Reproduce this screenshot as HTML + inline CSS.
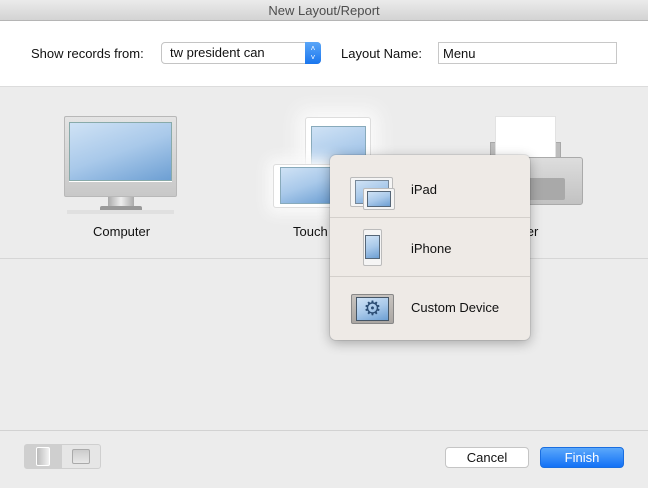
<!DOCTYPE html>
<html><head><meta charset="utf-8"><style>
*{margin:0;padding:0;box-sizing:border-box}
body{width:648px;height:488px;background:#ececec;font-family:"Liberation Sans",sans-serif;font-size:13px;color:#111;position:relative;overflow:hidden}
.a{position:absolute}
.scr{background:linear-gradient(160deg,#cfe2f5 0%,#a9c9ea 50%,#6d9fd3 100%)}
</style></head><body>
<div class="a" style="left:0;top:0;width:648px;height:21px;background:linear-gradient(#ebebeb,#d3d3d3);border-bottom:1px solid #b5b5b5;text-align:center;line-height:21px;color:#4d4d4d">New Layout/Report</div>
<div class="a" style="left:0;top:21px;width:648px;height:66px;background:#fff;border-bottom:1px solid #dcdcdc"></div>
<div class="a" style="left:31px;top:46px">Show records from:</div>
<div class="a" style="left:161px;top:42px;width:160px;height:22px;border:1px solid #c4c4c4;border-radius:4px;background:#fff;padding-left:8px;line-height:20px">tw president can</div>
<div class="a" style="left:305px;top:42px;width:16px;height:22px;background:linear-gradient(#5aa6f8,#1a76ee);border-radius:0 4px 4px 0;color:#fff;font-size:8px;text-align:center;line-height:9px;padding-top:2px">˄<br>˅</div>
<div class="a" style="left:341px;top:46px">Layout Name:</div>
<div class="a" style="left:438px;top:42px;width:179px;height:22px;border:1px solid #c8c8c8;background:#fff;padding-left:4px;line-height:22px">Menu</div>

<div class="a" style="left:64px;top:116px;width:113px;height:81px;background:linear-gradient(#e4e4e4,#c8c8c8);border:1px solid #b8b8b8;border-radius:2px"></div>
<div class="a scr" style="left:69px;top:122px;width:103px;height:59px;border:1px solid #8aa"></div>
<div class="a" style="left:69px;top:181px;width:103px;height:1px;background:#fff"></div>
<div class="a" style="left:108px;top:197px;width:26px;height:9px;background:linear-gradient(90deg,#aaa,#eee,#aaa)"></div>
<div class="a" style="left:100px;top:206px;width:42px;height:4px;background:#999;border-radius:2px 2px 0 0"></div>
<div class="a" style="left:67px;top:210px;width:107px;height:4px;background:#e0e0e0"></div>
<div class="a" style="left:93px;top:224px">Computer</div>

<div class="a" style="left:305px;top:117px;width:66px;height:70px;background:#fff;border:1px solid #ddd;border-radius:3px;box-shadow:0 0 18px 8px #fafafa"></div>
<div class="a scr" style="left:311px;top:126px;width:55px;height:60px;border:1px solid #8ab"></div>
<div class="a" style="left:273px;top:164px;width:60px;height:44px;background:#fff;border:1px solid #ddd;border-radius:3px;box-shadow:0 0 14px 6px #fafafa"></div>
<div class="a scr" style="left:280px;top:167px;width:52px;height:37px;border:1px solid #8ab"></div>
<div class="a" style="left:293px;top:224px">Touch</div>

<div class="a" style="left:490px;top:142px;width:71px;height:16px;background:#bdbdbd;border:1px solid #a8a8a8"></div>
<div class="a" style="left:495px;top:116px;width:61px;height:42px;background:#fff;border:1px solid #e2e2e2"></div>
<div class="a" style="left:480px;top:157px;width:103px;height:48px;background:linear-gradient(#ddd,#c2c2c2);border:1px solid #aaa;border-radius:3px"></div>
<div class="a" style="left:520px;top:178px;width:45px;height:22px;background:#a9a9a9;border-radius:2px"></div>
<div class="a" style="left:500px;top:224px">Printer</div>

<div class="a" style="left:0;top:258px;width:648px;height:1px;background:#d6d6d6"></div>

<div class="a" style="left:330px;top:155px;width:200px;height:185px;background:#eeeae6;border-radius:6px;box-shadow:0 3px 12px rgba(0,0,0,.3),0 0 0 1px rgba(0,0,0,.08)">
 <div class="a" style="left:0;top:62px;width:200px;height:1px;background:#d4d0cc"></div>
 <div class="a" style="left:0;top:121px;width:200px;height:1px;background:#d4d0cc"></div>
 <div class="a" style="left:20px;top:22px;width:43px;height:30px;background:#f5f5f5;border:1px solid #bbb;border-radius:2px"></div>
 <div class="a scr" style="left:25px;top:25px;width:34px;height:24px;border:1px solid #789"></div>
 <div class="a" style="left:33px;top:33px;width:32px;height:22px;background:#f5f5f5;border:1px solid #bbb;border-radius:2px"></div>
 <div class="a scr" style="left:37px;top:36px;width:24px;height:16px;border:1px solid #567"></div>
 <div class="a" style="left:81px;top:27px">iPad</div>
 <div class="a" style="left:33px;top:74px;width:19px;height:37px;background:#f5f5f5;border:1px solid #bbb;border-radius:2px"></div>
 <div class="a scr" style="left:35px;top:80px;width:15px;height:24px;border:1px solid #567"></div>
 <div class="a" style="left:81px;top:86px">iPhone</div>
 <div class="a" style="left:21px;top:139px;width:43px;height:30px;background:linear-gradient(#c8c4c0,#aaa6a2);border:1px solid #888;border-radius:2px"></div>
 <div class="a scr" style="left:26px;top:142px;width:33px;height:24px;border:1px solid #456;color:#2c4d74;font-size:20px;line-height:22px;text-align:center">⚙</div>
 <div class="a" style="left:81px;top:145px">Custom Device</div>
</div>

<div class="a" style="left:0;top:430px;width:648px;height:1px;background:#d2d2d2"></div>
<div class="a" style="left:24px;top:444px;width:77px;height:25px;border:1px solid #cfcfcf;border-radius:3px;background:#e6e6e6"></div>
<div class="a" style="left:25px;top:445px;width:37px;height:23px;background:#cfcfcf"></div>
<div class="a" style="left:36px;top:447px;width:14px;height:19px;background:linear-gradient(90deg,#bbb,#f2f2f2);border:1px solid #fff;border-radius:2px"></div>
<div class="a" style="left:72px;top:449px;width:18px;height:15px;background:linear-gradient(#ccc,#e8e8e8);border:1px solid #aaa;border-radius:2px"></div>
<div class="a" style="left:445px;top:447px;width:84px;height:21px;background:#fff;border:1px solid #c5c5c5;border-radius:4px;text-align:center;line-height:19px">Cancel</div>
<div class="a" style="left:540px;top:447px;width:84px;height:21px;background:linear-gradient(#5ba8fb,#1371f6);border:1px solid #1a6ee0;border-radius:4px;text-align:center;line-height:19px;color:#fff">Finish</div>
</body></html>
